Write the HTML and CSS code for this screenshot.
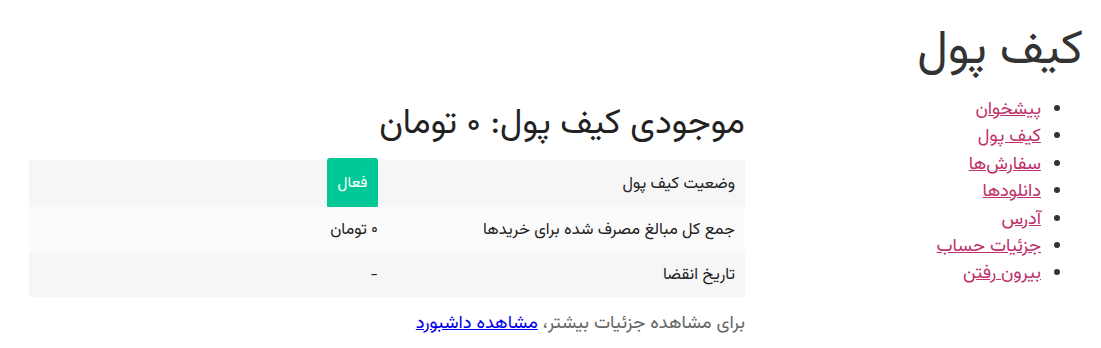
FILE: index.html
```html
<!DOCTYPE html>
<html lang="fa" dir="rtl">
<head>
<meta charset="utf-8">
<link rel="stylesheet" href="styles.css">
</head>
<body>
<div class="page">
  <aside class="sidebar">
    <h1 class="title">کیف پول</h1>
    <ul class="nav">
      <li><a href="#">پیشخوان</a></li>
      <li><a href="#">کیف پول</a></li>
      <li><a href="#">سفارش‌ها</a></li>
      <li><a href="#">دانلودها</a></li>
      <li><a href="#">آدرس</a></li>
      <li><a href="#">جزئیات حساب</a></li>
      <li><a href="#">بیرون رفتن</a></li>
    </ul>
  </aside>
  <main class="main">
    <h2 class="balance">موجودی کیف پول: ۰ تومان</h2>
    <table class="info">
      <tr class="odd first">
        <th>وضعیت کیف پول</th>
        <td class="badge-cell"><span class="badge">فعال</span></td>
      </tr>
      <tr class="even">
        <th>جمع کل مبالغ مصرف شده برای خریدها</th>
        <td>۰ تومان</td>
      </tr>
      <tr class="odd">
        <th>تاریخ انقضا</th>
        <td>-</td>
      </tr>
    </table>
    <p class="more">برای مشاهده جزئیات بیشتر، <a href="#">مشاهده داشبورد</a></p>
  </main>
</div>
</body>
</html>
```
FILE: styles.css
```css
html, body {
  margin: 0;
  padding: 0;
  background: #fff;
}
body {
  font-family: "Vazirmatn", "DejaVu Sans", sans-serif;
  color: #333;
}
.page {
  display: flex;
  flex-direction: row;
  align-items: flex-start;
}
.sidebar {
  width: 336px;
  padding-right: 18px;
  flex: none;
}
.title {
  font-size: 48px;
  font-weight: normal;
  margin: 20px 0 0 0;
  line-height: 64px;
  color: #333;
}
.nav {
  margin: 12px 0 0 0;
  padding: 0 42px 0 0;
  font-size: 18.3px;
  line-height: 27.4px;
}
.nav li { color: #333; }
.nav a {
  color: #c0306a;
  text-decoration: underline;
}
.main {
  width: 716px;
  margin-top: 100px;
  margin-right: 2px;
}
.balance {
  font-size: 35px;
  font-weight: normal;
  margin: 0 0 10px 0;
  line-height: 50px;
  color: #222;
}
.info {
  width: 100%;
  border-collapse: collapse;
  font-size: 16.4px;
  color: #222;
}
.info th, .info td {
  text-align: right;
  font-weight: normal;
  padding: 0 10px;
  height: 45px;
}
.info .first th, .info .first td { height: 47px; }
.info th { width: 337px; }
.odd th, .odd td { background: #f6f6f6; }
.even th, .even td { background: #fbfbfb; }
.info .badge-cell { padding: 0 10px; }
.badge {
  display: flex;
  align-items: center;
  justify-content: center;
  width: 51px;
  height: 50px;
  margin: -2px 0 -1px 0;
  background: #00c896;
  color: #fff;
  border-radius: 3px;
  font-size: 15.5px;
}
.more {
  margin: 12px 0 0 0;
  font-size: 18.4px;
  color: #666;
}
.more a { color: #0000ee; }
```
